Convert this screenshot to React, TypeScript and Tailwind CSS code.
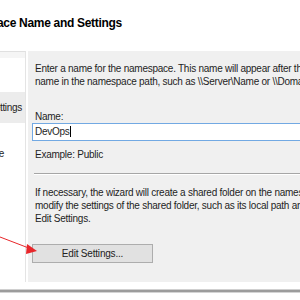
const font = { fontFamily: '"Liberation Sans", Arial, sans-serif' };

export default function App() {
  return (
    <div
      className="relative w-[300px] h-[300px] overflow-hidden bg-white text-[#1e1e1e]"
      style={font}
    >
      {/* wizard page title, clipped at the left */}
      <div className="h-[51px] overflow-hidden pt-[15px]">
        <div className="ml-[-48px] whitespace-nowrap text-[12px] leading-[16px] font-bold tracking-[-0.3px] text-black">
          Namespace Name and Settings
        </div>
      </div>

      <div className="flex h-[231px]">
        {/* steps list */}
        <div className="w-[26px] shrink-0 overflow-hidden border-r border-[#e4e4e4] border-t border-t-[#e0e0e0] bg-white text-[10px] leading-[13px] tracking-[-0.3px]">
          <div className="h-[6px] bg-[#f5f5f5]" />
          <div className="mt-[34px] flex h-[31px] items-center justify-end whitespace-nowrap bg-[#ececec] pr-[3px]">
            Settings
          </div>
          <div className="mt-[24px] flex h-[13px] items-center justify-end whitespace-nowrap pr-[21px]">
            Type
          </div>
        </div>

        {/* page content */}
        <div className="ml-[2px] w-[300px] shrink-0 bg-[#f0f0f0] text-[10px] leading-[13px] tracking-[-0.25px]">
          <div className="pl-[7px] pt-[11px] whitespace-nowrap">
            <div>Enter a name for the namespace. This name will appear after the server or domain</div>
            <div>name in the namespace path, such as \\Server\Name or \\Domain\Name.</div>
          </div>

          <div className="mt-[22px] pl-[7px]">Name:</div>
          <div className="ml-[4px] h-[18px] border border-[#72a9e3] bg-white pl-[2px] leading-[16px]">
            DevOps<span className="inline-block h-[11px] w-px translate-y-[2px] bg-black" />
          </div>
          <div className="mt-[7px] pl-[7px]">Example: Public</div>

          <div className="ml-[6px] mt-[12px] border-t border-[#a6a6a6] border-b border-b-white" />

          <div className="mt-[11px] pl-[7px] whitespace-nowrap">
            <div>If necessary, the wizard will create a shared folder on the namespace server. To</div>
            <div>modify the settings of the shared folder, such as its local path and permissions,</div>
            <div>Edit Settings.</div>
          </div>

          <button className="ml-[4px] mt-[19px] flex h-[19px] w-[121px] items-center justify-center border border-[#adadad] bg-[#e1e1e1] text-[10px] tracking-[-0.2px] text-[#222]">
            Edit Settings...
          </button>
        </div>
      </div>

      {/* frame edge */}
      <div className="mt-[7px] h-[1px] bg-[#d0d0d0]" />
      <div className="h-[2px] bg-[#9c9c9c]" />
      <div className="h-[1px] bg-[#d4d4d4]" />

      {/* red callout arrow */}
      <svg className="absolute left-0 top-0" width="300" height="300">
        <line x1="0" y1="237" x2="30" y2="248.5" stroke="#e8262a" strokeWidth="1" />
        <polygon points="37,251 27,244 26,254" fill="#e8262a" />
      </svg>
    </div>
  );
}
